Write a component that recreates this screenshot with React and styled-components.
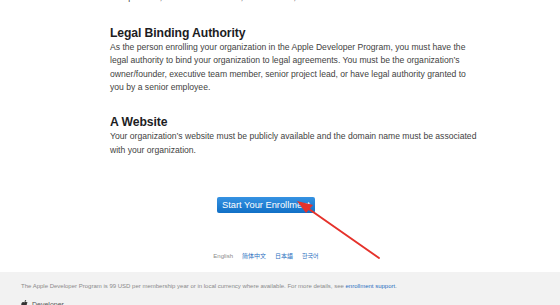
import React, { useLayoutEffect, useRef } from "react";
import styled, { createGlobalStyle } from "styled-components";

const Global = createGlobalStyle`
  html, body { margin: 0; padding: 0; background: #fff; overflow: hidden; }
  body { font-family: "Liberation Sans", Arial, sans-serif; -webkit-font-smoothing: antialiased; }
  #root { height: 305px; }
`;

const Viewport = styled.div`
  position: relative;
  height: 305px;
  overflow: hidden;
`;

const Main = styled.main`
  padding: 40px 0 0 110px;
`;

const Section = styled.section`
  width: 368px;
  margin-bottom: 21px;
`;

const Heading = styled.h2`
  margin: 0;
  font-size: 12.2px;
  line-height: 15px;
  font-weight: 600;
  color: #1d1d1f;
  letter-spacing: -0.1px;
`;

const Para = styled.p`
  margin: 0;
  font-size: 8.6px;
  line-height: 13.4px;
  letter-spacing: 0;
  color: #3f3f42;
`;

const CtaRow = styled.div`
  width: 312px;
  display: flex;
  justify-content: center;
  padding-top: 19px;
`;

const Button = styled.a`
  display: inline-block;
  width: 98px;
  height: 16px;
  line-height: 16px;
  text-align: center;
  border-radius: 2px;
  font-size: 9.3px;
  color: #fff;
  text-decoration: none;
  background: linear-gradient(#3592e2, #1170c6);
  border: 0;
`;

const Langs = styled.nav`
  width: 312px;
  display: flex;
  justify-content: center;
  gap: 9px;
  padding: 38px 0 11px;
  font-size: 6px;
  line-height: 10px;
`;

const Lang = styled.a`
  color: ${(p) => (p.$current ? "#8a8a8a" : "#2a6fc0")};
  text-decoration: none;
  font-family: "Liberation Sans", "Noto Sans CJK SC", "Noto Sans CJK JP", "Noto Sans CJK KR", sans-serif;
`;

const Footer = styled.footer`
  background: #f2f2f2;
  padding: 10px 21px 10px;
`;

const Note = styled.p`
  margin: 0 0 10px;
  font-size: 6px;
  line-height: 8px;
  color: #8a8a8a;
`;

const Link = styled.a`
  color: #2a6fc0;
  text-decoration: none;
`;

const Crumbs = styled.div`
  display: flex;
  align-items: center;
  gap: 4px;
  font-size: 7px;
  color: #555;
`;

const OverlaySvg = styled.svg`
  position: fixed;
  left: 0;
  top: 0;
  pointer-events: none;
`;

function ArrowOverlay() {
  return (
    <OverlaySvg width="560" height="305" viewBox="0 0 560 305">
      <line x1="379" y1="258" x2="306" y2="207" stroke="#e5322b" strokeWidth="2" strokeLinecap="round" />
      <polygon points="297,201 313,205 306,213" fill="#e5322b" />
    </OverlaySvg>
  );
}

export default function App() {
  const viewRef = useRef(null);
  const headRef = useRef(null);
  useLayoutEffect(() => {
    if (viewRef.current && headRef.current) {
      viewRef.current.scrollTop = headRef.current.offsetTop - 26;
    }
  }, []);
  return (
    <>
      <Global />
      <Viewport ref={viewRef}>
        <Main>
          <Section>
            <Heading>Legal Entity Status</Heading>
            <Para>
              Your organization must be a legal entity so that it can enter into contracts with Apple. We do not
              accept DBAs, fictitious businesses, trade names, or branches.
            </Para>
          </Section>
          <Section>
            <Heading ref={headRef}>Legal Binding Authority</Heading>
            <Para>
              As the person enrolling your organization in the Apple Developer Program, you must have the legal
              authority to bind your organization to legal agreements. You must be the organization’s
              owner/founder, executive team member, senior project lead, or have legal authority granted to you by
              a senior employee.
            </Para>
          </Section>
          <Section>
            <Heading>A Website</Heading>
            <Para>
              Your organization’s website must be publicly available and the domain name must be associated with
              your organization.
            </Para>
          </Section>
          <CtaRow>
            <Button href="#">Start Your Enrollment</Button>
          </CtaRow>
          <Langs>
            <Lang $current>English</Lang>
            <Lang href="#">简体中文</Lang>
            <Lang href="#">日本語</Lang>
            <Lang href="#">한국어</Lang>
          </Langs>
        </Main>
        <Footer>
          <Note>
            The Apple Developer Program is 99 USD per membership year or in local currency where available. For more
            details, see <Link href="#">enrollment support</Link>.
          </Note>
          <Crumbs>
            <svg width="7" height="8" viewBox="0 0 17 20" fill="#333">
              <path d="M14.1 10.6c0-2.6 2.1-3.8 2.2-3.9-1.2-1.8-3.1-2-3.700-2-1.6-.2-3.1.9-3.9.9-.8 0-2-.9-3.3-.9C3.7 4.8 2.1 5.8 1.3 7.3c-1.8 3.1-.5 7.6 1.3 10.1.8 1.2 1.8 2.6 3.1 2.5 1.3-.1 1.7-.8 3.3-.8 1.5 0 2 .8 3.3.8 1.4 0 2.2-1.2 3.1-2.5 1-1.4 1.4-2.8 1.4-2.9-.1 0-2.7-1-2.7-3.9zM11.6 3c.7-.8 1.2-2 1-3.1-1 0-2.2.7-2.9 1.5-.6.7-1.2 1.9-1 3 1.1.1 2.2-.6 2.9-1.4z" />
            </svg>
            <span>Developer</span>
          </Crumbs>
        </Footer>
      </Viewport>
      <ArrowOverlay />
    </>
  );
}
